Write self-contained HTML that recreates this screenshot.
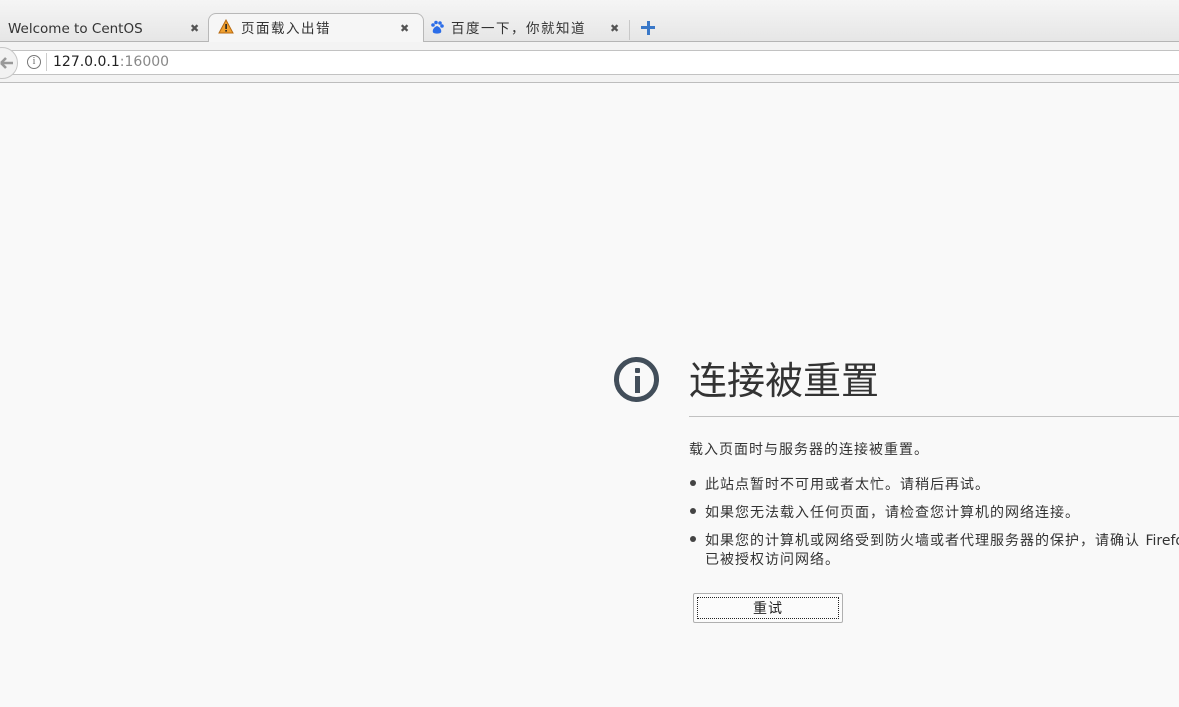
<!DOCTYPE html>
<html><head><meta charset="utf-8"><style>
*{margin:0;padding:0;box-sizing:border-box}
body{width:1179px;height:707px;overflow:hidden;background:#f9f9fa;font-family:"DejaVu Sans","Noto Sans CJK SC",sans-serif;position:relative;color:#333}
.tabbar{position:absolute;left:0;top:0;width:1179px;height:42px;background:linear-gradient(#f5f5f5,#e6e6e6);border-bottom:1px solid #b5b5b5}
.tab{position:absolute;top:15px;height:28px;font-size:13.5px;color:#333;line-height:28px;white-space:nowrap}
.cj{letter-spacing:1.5px}
.active{position:absolute;left:208px;top:13px;width:216px;height:29px;background:#f6f6f6;border:1px solid #b8b8b8;border-bottom:none;border-radius:8px 8px 0 0}
.x{position:absolute;top:15px;font-size:11px;color:#555;line-height:28px}
.nav{position:absolute;left:0;top:42px;width:1179px;height:41px;background:#f3f3f3;border-bottom:1px solid #bdbdbd}
.url{position:absolute;left:10px;top:8px;width:1175px;height:25px;background:#fff;border:1px solid #c2c2c2;border-radius:2px}
.back{position:absolute;left:-14px;top:5px;width:32px;height:32px;border-radius:50%;background:#f2f2f2;border:1px solid #c6c6c6}
.content{position:absolute;left:0;top:84px;width:1179px;height:623px;background:#f9f9f9}
.ic{position:absolute;left:614px;top:357px;width:45px;height:45px;border:5px solid #424e5a;border-radius:50%}
h1{position:absolute;left:689px;top:350px;font-size:38px;font-weight:normal;color:#333;white-space:nowrap}
.hr{position:absolute;left:689px;top:416px;width:490px;height:1px;background:#c1c1c1}
.p{position:absolute;left:689px;font-size:14px;letter-spacing:1px;line-height:19px;color:#333;white-space:nowrap}
.p span{letter-spacing:0}
.dot{position:absolute;left:690px;width:6px;height:6px;border-radius:50%;background:#444}
.btn{position:absolute;left:693px;top:593px;width:150px;height:30px;border:1px solid #b0b0b0;background:#fbfbfb;border-radius:2px}
.btn div{position:absolute;left:3px;top:3px;right:3px;bottom:3px;border:1px dotted #222;text-align:center;font-size:14px;line-height:22px;color:#222;letter-spacing:1px}
</style></head><body>
<div class="tabbar">
 <div class="tab" style="left:8px">Welcome to CentOS</div><div class="x" style="left:190px">✖</div>
 <div class="active"></div>
 <svg style="position:absolute;left:218px;top:19px" width="16" height="15"><path d="M8 1L15 14H1Z" fill="#f0a030" stroke="#b86a10"/><rect x="7.3" y="5" width="1.6" height="5" fill="#222"/><rect x="7.3" y="11" width="1.6" height="1.6" fill="#222"/></svg>
 <div class="tab cj" style="left:241px">页面载入出错</div><div class="x" style="left:400px">✖</div>
 <svg style="position:absolute;left:430px;top:20px" width="14" height="15"><circle cx="3" cy="5" r="1.8" fill="#2b6de8"/><circle cx="6" cy="2.5" r="1.8" fill="#2b6de8"/><circle cx="10" cy="3" r="1.8" fill="#2b6de8"/><circle cx="12" cy="6" r="1.8" fill="#2b6de8"/><path d="M7 6C4 7 2 10 3 12.5 5 14 9 14 11 12.5 12 10 10 7 7 6Z" fill="#2b6de8"/></svg>
 <div class="tab cj" style="left:451px">百度一下，你就知道</div><div class="x" style="left:610px">✖</div>
 <div style="position:absolute;left:629px;top:20px;width:1px;height:20px;background:#c8c8c8"></div>
 <div style="position:absolute;left:641px;top:26px;width:14px;height:3px;background:#3a78c8"></div>
 <div style="position:absolute;left:646.5px;top:20.5px;width:3px;height:14px;background:#3a78c8"></div>
</div>
<div class="nav">
 <div class="url"></div>
 <div class="back"></div>
 <svg style="position:absolute;left:0;top:14px" width="14" height="14"><path d="M1 7H13M1 7L6 2M1 7L6 12" stroke="#999" stroke-width="2.6" fill="none"/></svg>
 <div style="position:absolute;left:27px;top:13px;width:14px;height:14px;border:1px solid #777;border-radius:50%;font-size:10px;line-height:12px;text-align:center;color:#666;font-family:'Liberation Serif',serif">i</div>
 <div style="position:absolute;left:46px;top:11px;width:1px;height:18px;background:#ccc"></div>
 <div style="position:absolute;left:53px;top:12px;font-size:14px;color:#222">127.0.0.1<span style="color:#888">:16000</span></div>
</div>
<div class="content"></div>
<div class="ic"><div style="position:absolute;left:15.5px;top:6px;width:5px;height:5px;background:#424e5a;border-radius:1px"></div><div style="position:absolute;left:15.5px;top:14px;width:5px;height:17px;background:#424e5a"></div></div>
<h1>连接被重置</h1>
<div class="hr"></div>
<div class="p" style="top:441px">载入页面时与服务器的连接被重置。</div>
<div class="dot" style="top:480px"></div><div class="p" style="top:476px;left:705px">此站点暂时不可用或者太忙。请稍后再试。</div>
<div class="dot" style="top:508px"></div><div class="p" style="top:504px;left:705px">如果您无法载入任何页面，请检查您计算机的网络连接。</div>
<div class="dot" style="top:536px"></div><div class="p" style="top:532px;left:705px">如果您的计算机或网络受到防火墙或者代理服务器的保护，请确认 <span>Firefox</span><br>已被授权访问网络。</div>
<div class="btn"><div>重试</div></div>
</body></html>
